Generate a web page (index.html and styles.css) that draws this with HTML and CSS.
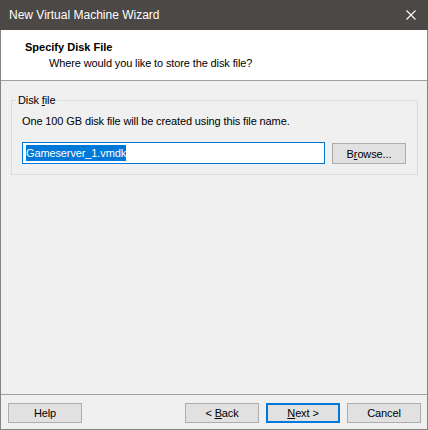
FILE: index.html
```html
<!DOCTYPE html>
<html lang="en">
<head>
<meta charset="utf-8">
<title>New Virtual Machine Wizard</title>
<link rel="stylesheet" href="styles.css">
</head>
<body>
<div class="window">
  <div class="titlebar">
    <span class="title">New Virtual Machine Wizard</span>
    <svg class="close" width="10" height="10" viewBox="0 0 10 10"><path d="M0.5 0.5 L9.5 9.5 M9.5 0.5 L0.5 9.5" stroke="#ffffff" stroke-width="1.1" fill="none"/></svg>
  </div>
  <div class="header">
    <div class="h-title">Specify Disk File</div>
    <div class="h-sub">Where would you like to store the disk file?</div>
  </div>
  <div class="content">
    <fieldset class="group">
      <legend class="legend">Disk <u>f</u>ile</legend>
      <div class="desc">One 100 GB disk file will be created using this file name.</div>
      <div class="row">
        <div class="input"><span class="sel">Gameserver_1.vmdk</span></div>
        <div class="btn browse"><span>B<u>r</u>owse...</span></div>
      </div>
    </fieldset>
  </div>
  <div class="footer">
    <div class="btn"><span>Help</span></div>
    <div class="spacer"></div>
    <div class="btn"><span>&lt; <u>B</u>ack</span></div>
    <div class="btn default"><span><u>N</u>ext &gt;</span></div>
    <div class="btn"><span>Cancel</span></div>
  </div>
</div>
</body>
</html>
```
FILE: styles.css
```css
html, body {
  margin: 0;
  padding: 0;
}
body {
  width: 428px;
  height: 430px;
  background: #f0f0f0;
  font-family: "Liberation Sans", Arial, sans-serif;
  font-size: 11px;
  letter-spacing: -0.12px;
  color: #000;
  overflow: hidden;
}
.window {
  width: 428px;
  height: 430px;
  box-sizing: border-box;
  display: flex;
  flex-direction: column;
  border-left: 1px solid #858585;
  border-right: 1px solid #858585;
  border-bottom: 1px solid #858585;
}
.titlebar {
  height: 30px;
  flex: none;
  margin: 0 -1px;
  background: #4b4845;
  color: #ffffff;
  display: flex;
  align-items: center;
  justify-content: space-between;
  padding: 0 12px 0 9px;
  letter-spacing: 0;
}
.title {
  font-size: 12px;
}
.close {
  display: block;
}
.header {
  flex: none;
  height: 51px;
  background: #ffffff;
  border-bottom: 1px solid #a0a0a0;
  box-sizing: border-box;
  padding-top: 9px;
}
.h-title {
  font-weight: bold;
  padding-left: 24px;
  line-height: 16px;
  letter-spacing: 0;
}
.h-sub {
  padding-left: 48px;
  line-height: 16px;
}
.content {
  flex: 1;
  padding: 11px 9px 0 10px;
}
.group {
  margin: 0;
  border: 1px solid #dcdcdc;
  padding: 5px 10px 10px 10px;
}
.legend {
  padding: 0 2px;
  margin-left: -6px;
  line-height: 16px;
}
.desc {
  line-height: 16px;
}
.row {
  display: flex;
  align-items: flex-start;
  margin-top: 13px;
}
.input {
  width: 303px;
  height: 22px;
  box-sizing: border-box;
  border: 1px solid #0078d7;
  background: #ffffff;
  padding: 2px 3px;
  line-height: 16px;
}
.sel {
  background: #0078d7;
  color: #ffffff;
  display: inline-block;
  line-height: 16px;
}
.btn {
  width: 74px;
  height: 20px;
  box-sizing: border-box;
  border: 1px solid #adadad;
  background: #e1e1e1;
  display: flex;
  align-items: center;
  justify-content: center;
  line-height: 16px;
}
.browse {
  margin-left: 7px;
  margin-top: 1px;
  height: 21px;
}
.footer {
  flex: none;
  border-top: 1px solid #a0a0a0;
  padding: 8px 6px 6px 7px;
  display: flex;
  gap: 7px;
}
.spacer {
  flex: 1;
}
.default {
  border: 2px solid #0078d7;
}
```
